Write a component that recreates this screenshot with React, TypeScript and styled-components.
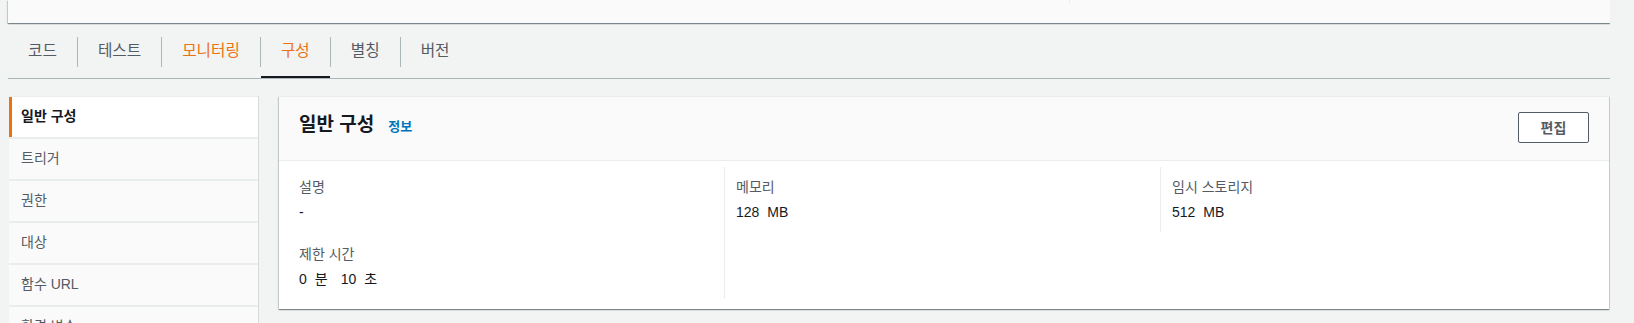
import * as React from 'react'
import styled, { createGlobalStyle } from 'styled-components'

const GlobalStyle = createGlobalStyle`
    html,
    body {
        margin: 0;
        padding: 0;
        background: #f2f3f3;
        overflow: hidden;
    }
    body {
        font-family: 'Liberation Sans', 'Noto Sans CJK KR', sans-serif;
        font-size: 14px;
        color: #16191f;
    }
    * {
        box-sizing: border-box;
    }
`

const Page = styled.div`
    width: 1610px;
    height: 323px;
    padding-left: 8px;
    overflow: hidden;
`

const TopCard = styled.div`
    background: #fafafa;
    padding-bottom: 20px;
    box-shadow: 0 1px 1px 0 rgba(0, 28, 36, 0.3),
        1px 1px 1px 0 rgba(0, 28, 36, 0.15),
        -1px 1px 1px 0 rgba(0, 28, 36, 0.15);
`

const TopCardColumn = styled.div`
    width: 1062px;
    height: 3px;
    border-right: 1px solid #eaeded;
`

const TabList = styled.div`
    display: flex;
    padding-top: 14px;
    border-bottom: 1px solid #aab7b8;
`

const Tab = styled.div<{ $active?: boolean }>`
    position: relative;
    padding-bottom: 11px;

    &::after {
        content: '';
        display: ${(p) => (p.$active ? 'block' : 'none')};
        position: absolute;
        left: 1px;
        right: 0;
        bottom: 0;
        height: 2px;
        background: #16191f;
    }
`

const TabLabel = styled.div<{ $first?: boolean; $orange?: boolean }>`
    height: 30px;
    display: flex;
    align-items: center;
    padding: 0 20px 5px;
    border-left: ${(p) => (p.$first ? 'none' : '1px solid #aab7b8')};
    font-size: 15.7px;
    color: ${(p) => (p.$orange ? '#ec7211' : '#545b64')};
`

const Content = styled.div`
    display: flex;
    align-items: flex-start;
    gap: 21px;
    margin-top: 17px;
    margin-left: 1px;
`

const Nav = styled.div`
    width: 249px;
    flex-shrink: 0;
    display: flex;
    flex-direction: column;
    gap: 2px;
    background: #eaeded;
    border-top: 1px solid #eaeded;
    box-shadow: 1px 0 0 0 #d5dbdb;
`

const NavItem = styled.div<{ $active?: boolean }>`
    height: 40px;
    display: flex;
    align-items: center;
    padding-left: ${(p) => (p.$active ? '9px' : '12px')};
    padding-bottom: 4px;
    border-left: ${(p) => (p.$active ? '3px solid #ec7211' : 'none')};
    background: ${(p) => (p.$active ? '#ffffff' : '#fafafa')};
    color: ${(p) => (p.$active ? '#16191f' : '#545b64')};
    font-weight: ${(p) => (p.$active ? 700 : 400)};
    font-size: 14px;
`

const Panel = styled.div`
    width: 1330px;
    background: #ffffff;
    border-top: 1px solid #eaeded;
    box-shadow: 0 1px 1px 0 rgba(0, 28, 36, 0.3),
        1px 1px 1px 0 rgba(0, 28, 36, 0.15),
        -1px 1px 1px 0 rgba(0, 28, 36, 0.15);
`

const PanelHeader = styled.div`
    display: flex;
    align-items: flex-start;
    justify-content: space-between;
    padding: 15px 20px 17px;
    background: #fafafa;
    border-bottom: 1px solid #eaeded;
`

const TitleRow = styled.div`
    display: flex;
    align-items: baseline;
    margin-top: 2px;
`

const Title = styled.h2`
    margin: 0;
    font-size: 19px;
    line-height: 22px;
    font-weight: 700;
    color: #16191f;
`

const InfoLink = styled.a`
    margin-left: 14px;
    font-size: 13px;
    font-weight: 700;
    color: #0073bb;
    text-decoration: none;
`

const Button = styled.button`
    width: 71px;
    height: 31px;
    background: #ffffff;
    border: 1px solid #545b64;
    border-radius: 2px;
    font-family: inherit;
    font-size: 14px;
    font-weight: 700;
    color: #545b64;
    padding: 0 0 2px;
`

const PanelBody = styled.div`
    display: grid;
    grid-template-columns: 426px 436px 1fr;
    align-items: start;
    padding: 6px 20px 10px;
`

const Column = styled.div<{ $first?: boolean; $last?: boolean }>`
    padding: 10px 0 10px ${(p) => (p.$first ? '0' : '11px')};
    border-right: ${(p) => (p.$last ? 'none' : '1px solid #eaeded')};
    display: flex;
    flex-direction: column;
    gap: 22px;
`

const Field = styled.div`
    display: flex;
    flex-direction: column;
    gap: 5px;
`

const Label = styled.div`
    font-size: 14px;
    line-height: 20px;
    color: #545b64;
`

const Value = styled.div`
    font-size: 14px;
    line-height: 20px;
    color: #16191f;
`

const Unit = styled.span<{ $trail?: boolean }>`
    margin-left: 8px;
    margin-right: ${(p) => (p.$trail ? '13px' : '0')};
`

const tabs = [
    { name: '코드' },
    { name: '테스트' },
    { name: '모니터링', orange: true },
    { name: '구성', orange: true, active: true },
    { name: '별칭' },
    { name: '버전' },
]

const navItems = ['일반 구성', '트리거', '권한', '대상', '함수 URL', '환경 변수', '태그', 'VPC']

const App = () => (
    <Page>
        <GlobalStyle />
        <TopCard>
            <TopCardColumn />
        </TopCard>

        <TabList>
            {tabs.map((t, i) => (
                <Tab key={t.name} $active={t.active}>
                    <TabLabel $first={i === 0} $orange={t.orange}>
                        {t.name}
                    </TabLabel>
                </Tab>
            ))}
        </TabList>

        <Content>
            <Nav>
                {navItems.map((item, i) => (
                    <NavItem key={item} $active={i === 0}>
                        {item}
                    </NavItem>
                ))}
            </Nav>

            <Panel>
                <PanelHeader>
                    <TitleRow>
                        <Title>일반 구성</Title>
                        <InfoLink href="#info">정보</InfoLink>
                    </TitleRow>
                    <Button>편집</Button>
                </PanelHeader>
                <PanelBody>
                    <Column $first>
                        <Field>
                            <Label>설명</Label>
                            <Value>-</Value>
                        </Field>
                        <Field>
                            <Label>제한 시간</Label>
                            <Value>
                                0<Unit $trail>분</Unit>10<Unit>초</Unit>
                            </Value>
                        </Field>
                    </Column>
                    <Column>
                        <Field>
                            <Label>메모리</Label>
                            <Value>
                                128<Unit>MB</Unit>
                            </Value>
                        </Field>
                    </Column>
                    <Column $last>
                        <Field>
                            <Label>임시 스토리지</Label>
                            <Value>
                                512<Unit>MB</Unit>
                            </Value>
                        </Field>
                    </Column>
                </PanelBody>
            </Panel>
        </Content>
    </Page>
)

export default App
